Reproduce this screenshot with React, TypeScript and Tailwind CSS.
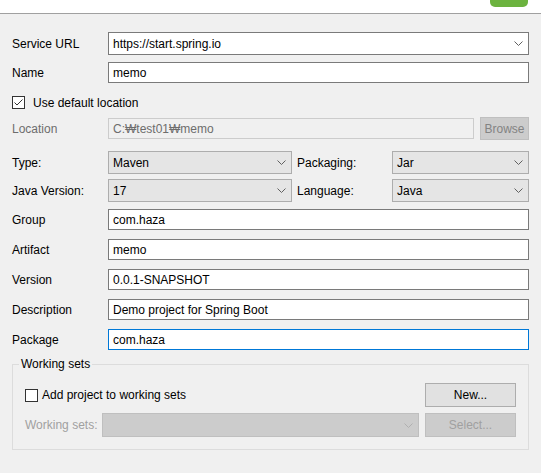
import React from "react";

function Chevron({ color = "#606060" }: { color?: string }) {
  return (
    <svg width="9" height="5" viewBox="0 0 9 5" className="shrink-0">
      <polyline points="0.5,0.5 4.5,4.5 8.5,0.5" fill="none" stroke={color} strokeWidth="1" />
    </svg>
  );
}

function TextField({ value, focused = false }: { value: string; focused?: boolean }) {
  return (
    <div
      className={
        "flex h-[21px] flex-1 items-center bg-white pl-[4px] text-black border " +
        (focused ? "border-[#0078d7]" : "border-[#7a7a7a]")
      }
    >
      {value}
    </div>
  );
}

function Row({ label, children, className = "" }: { label: string; children: React.ReactNode; className?: string }) {
  return (
    <div className={"flex items-center " + className}>
      <div className="w-[96px] shrink-0">{label}</div>
      {children}
    </div>
  );
}

function ReadCombo({ value, className = "" }: { value: string; className?: string }) {
  return (
    <div className={"flex h-[23px] items-center border border-[#adadad] bg-[#e5e5e5] pl-[4px] pr-[5px] " + className}>
      <span className="flex-1">{value}</span>
      <Chevron />
    </div>
  );
}

export default function App() {
  return (
    <div className="h-[473px] w-[541px] overflow-hidden bg-[#f0f0f0] text-[12px] text-black font-['Liberation_Sans','Noto_Sans_CJK_KR',sans-serif]">
      <div className="flex h-[14px] justify-end border-b border-[#a0a0a0] bg-white pr-[13px]">
        <div className="h-[7px] w-[38px] rounded-b-[5px] bg-[#6cb33f]" />
      </div>

      <div className="flex flex-col pl-[12px] pr-[12px]">
        <Row label="Service URL" className="mt-[18px] h-[23px]">
          <div className="flex h-[23px] flex-1 items-center border border-[#7a7a7a] bg-white pl-[4px] pr-[5px]">
            <span className="flex-1">https://start.spring.io</span>
            <Chevron />
          </div>
        </Row>

        <Row label="Name" className="mt-[7px] h-[21px]">
          <TextField value="memo" />
        </Row>

        <div className="mt-[13px] flex h-[13px] items-center">
          <div className="flex h-[13px] w-[13px] shrink-0 items-center justify-center border border-[#333333] bg-white">
            <svg width="11" height="11" viewBox="0 0 11 11">
              <polyline points="1.5,5.5 4,8 9.5,2.5" fill="none" stroke="#333333" strokeWidth="1" />
            </svg>
          </div>
          <span className="ml-[8px]">Use default location</span>
        </div>

        <div className="mt-[8px] flex h-[23px] items-center">
          <div className="w-[96px] shrink-0 text-[#6d6d6d]">Location</div>
          <div className="flex h-[21px] flex-1 items-center border border-[#cccccc] bg-[#f0f0f0] pl-[4px] text-[#6d6d6d]">
            C:₩test01₩memo
          </div>
          <div className="ml-[6px] flex h-[23px] w-[49px] items-center justify-center border border-[#bfbfbf] bg-[#cccccc] text-[#838383]">
            Browse
          </div>
        </div>

        <Row label="Type:" className="mt-[11px] h-[23px]">
          <ReadCombo value="Maven" className="w-[184px]" />
          <div className="w-[100px] shrink-0 pl-[5px]">Packaging:</div>
          <ReadCombo value="Jar" className="flex-1" />
        </Row>

        <Row label="Java Version:" className="mt-[5px] h-[23px]">
          <ReadCombo value="17" className="w-[184px]" />
          <div className="w-[100px] shrink-0 pl-[5px]">Language:</div>
          <ReadCombo value="Java" className="flex-1" />
        </Row>

        <Row label="Group" className="mt-[7px] h-[21px]">
          <TextField value="com.haza" />
        </Row>
        <Row label="Artifact" className="mt-[9px] h-[21px]">
          <TextField value="memo" />
        </Row>
        <Row label="Version" className="mt-[9px] h-[21px]">
          <TextField value="0.0.1-SNAPSHOT" />
        </Row>
        <Row label="Description" className="mt-[9px] h-[21px]">
          <TextField value="Demo project for Spring Boot" />
        </Row>
        <Row label="Package" className="mt-[9px] h-[21px]">
          <TextField value="com.haza" focused />
        </Row>

        <fieldset className="mt-[7px] border border-[#dcdcdc] px-[12px] pb-[12px] pt-[12px]">
          <legend className="-ml-[6px] px-[2px] leading-[14px]">Working sets</legend>
          <div className="flex h-[24px] items-center">
            <div className="h-[13px] w-[13px] shrink-0 border border-[#333333] bg-white" />
            <span className="ml-[4px]">Add project to working sets</span>
            <div className="ml-auto flex h-[24px] w-[91px] items-center justify-center border border-[#adadad] bg-[#e1e1e1]">
              New...
            </div>
          </div>
          <div className="mt-[6px] flex h-[24px] items-center">
            <div className="w-[77px] shrink-0 text-[#a0a0a0]">Working sets:</div>
            <div className="flex h-[24px] flex-1 items-center justify-end border border-[#bfbfbf] bg-[#cccccc] pr-[5px]">
              <Chevron color="#b0b0b0" />
            </div>
            <div className="ml-[6px] flex h-[24px] w-[91px] items-center justify-center border border-[#bfbfbf] bg-[#cccccc] text-[#a0a0a0]">
              Select...
            </div>
          </div>
        </fieldset>
      </div>
    </div>
  );
}
